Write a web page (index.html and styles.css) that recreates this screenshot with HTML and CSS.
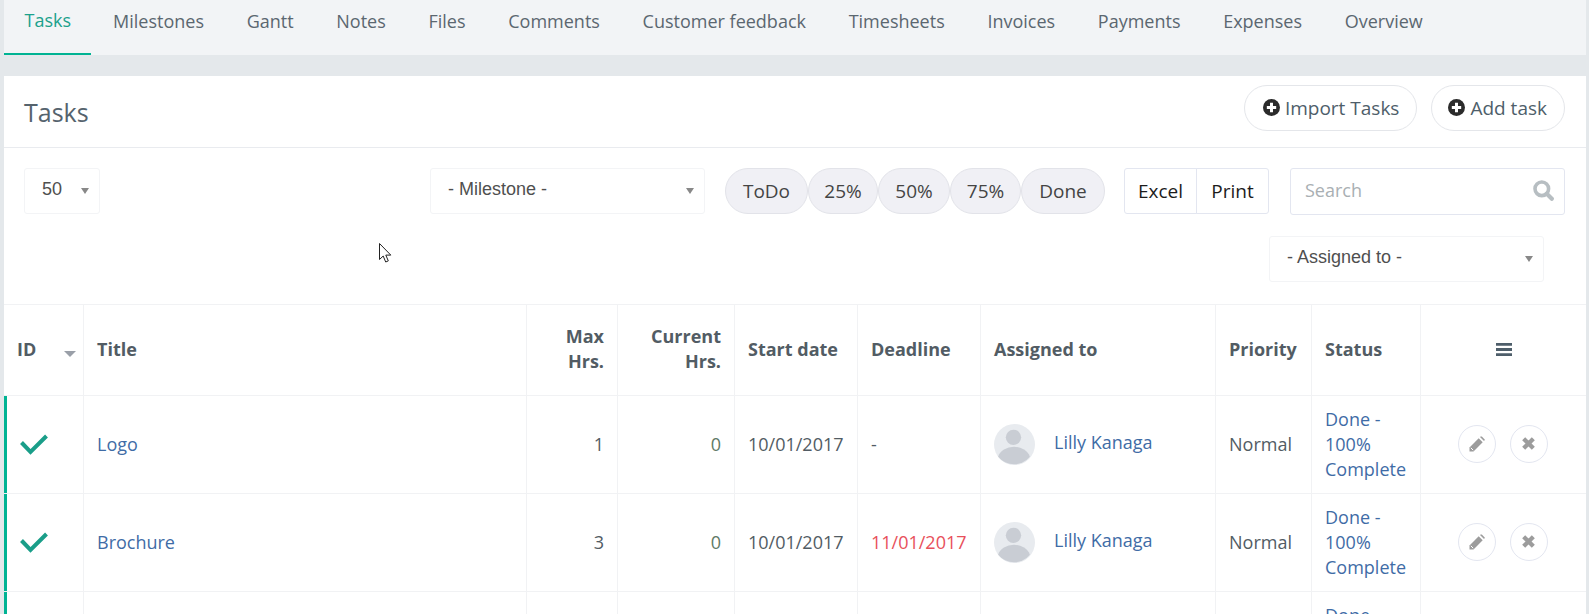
FILE: index.html
```html
<!DOCTYPE html>
<html lang="en">
<head>
  <meta charset="UTF-8" />
  <title>Tasks</title>
  <link rel="stylesheet" href="styles.css">
</head>
<body>
  <!-- Project tabs -->
  <ul class="tabs">
    <li class="tab active">Tasks</li>
    <li class="tab">Milestones</li>
    <li class="tab">Gantt</li>
    <li class="tab">Notes</li>
    <li class="tab">Files</li>
    <li class="tab">Comments</li>
    <li class="tab">Customer feedback</li>
    <li class="tab">Timesheets</li>
    <li class="tab">Invoices</li>
    <li class="tab">Payments</li>
    <li class="tab">Expenses</li>
    <li class="tab">Overview</li>
  </ul>

  <div class="panel">
    <div class="panel-head">
      <h1 class="panel-title">Tasks</h1>
      <div class="panel-actions">
        <a class="round-btn">
          <svg class="plus-icon" viewBox="0 0 16 16"><circle cx="8" cy="8" r="8" fill="#2b2b2b"/><path d="M8 3.6v8.8M3.6 8h8.8" stroke="#fff" stroke-width="2.8"/></svg>
          Import Tasks
        </a>
        <a class="round-btn">
          <svg class="plus-icon" viewBox="0 0 16 16"><circle cx="8" cy="8" r="8" fill="#2b2b2b"/><path d="M8 3.6v8.8M3.6 8h8.8" stroke="#fff" stroke-width="2.8"/></svg>
          Add task
        </a>
      </div>
    </div>

    <!-- Filters -->
    <div class="filters">
      <div class="filter-row">
        <div class="dropdown dropdown-small"><span>50</span><i class="caret"></i></div>
        <div class="dropdown dropdown-wide push-right"><span>- Milestone -</span><i class="caret"></i></div>
        <div class="pills">
          <a class="pill pill-todo">ToDo</a>
          <a class="pill pill-25">25%</a>
          <a class="pill pill-50">50%</a>
          <a class="pill pill-75">75%</a>
          <a class="pill pill-done">Done</a>
        </div>
        <div class="export-group">
          <a class="export-btn">Excel</a>
          <a class="export-btn">Print</a>
        </div>
        <div class="search-box">
          <span class="search-text">Search</span>
          <svg class="search-icon" viewBox="0 0 21 21"><circle cx="8.8" cy="8.8" r="6.8" fill="none" stroke="#b7bec2" stroke-width="3.6"/><path d="M13.8 13.8l5 5" stroke="#b7bec2" stroke-width="4.2" stroke-linecap="round"/></svg>
        </div>
      </div>
      <div class="filter-row filter-row-end">
        <div class="dropdown dropdown-wide"><span>- Assigned to -</span><i class="caret"></i></div>
      </div>
    </div>

    <table class="task-table">
      <colgroup>
        <col class="col-id"><col class="col-title"><col class="col-max"><col class="col-current">
        <col class="col-date"><col class="col-date"><col class="col-assigned"><col class="col-priority">
        <col class="col-status"><col class="col-actions">
      </colgroup>
      <thead>
        <tr>
          <th class="sort-cell">ID<i class="sort-caret"></i></th>
          <th>Title</th>
          <th class="num">Max Hrs.</th>
          <th class="num">Current Hrs.</th>
          <th>Start date</th>
          <th>Deadline</th>
          <th>Assigned to</th>
          <th>Priority</th>
          <th>Status</th>
          <th class="center">
            <svg class="menu-icon" viewBox="0 0 16 13"><path d="M0 0h16v2.8H0zM0 5.1h16v2.8H0zM0 10.200h16V13H0z" fill="#4e5e6a"/></svg>
          </th>
        </tr>
      </thead>
      <tbody>
        <tr>
          <td class="check-cell"><svg class="check-icon" viewBox="0 0 28 22"><path d="M1.500 8.500l9 9.500L26.500 2" fill="none" stroke="#1a9e89" stroke-width="4"/></svg></td>
          <td><a class="link">Logo</a></td>
          <td class="num">1</td>
          <td class="num zero">0</td>
          <td>10/01/2017</td>
          <td>-</td>
          <td>
            <div class="assignee">
              <svg class="avatar" viewBox="0 0 40 40"><circle cx="20" cy="20" r="20" fill="#e8ebef"/><circle cx="19" cy="13" r="7.500" fill="#c9cdd4"/><path d="M4 32a16 13 0 0 1 31 0a20 20 0 0 1-31 0z" fill="#c9cdd4"/></svg>
              <a class="link">Lilly Kanaga</a>
            </div>
          </td>
          <td>Normal</td>
          <td><a class="link">Done - 100% Complete</a></td>
          <td class="center">
            <div class="row-actions">
              <a class="icon-btn"><svg viewBox="0 0 16 16" width="16" height="16"><path d="M.5 11.500L9.700 2.300l4 4L4.500 15.500H.5z" fill="#9c9c9c"/><path d="M11 1l.6-.5h1.200l2.700 2.700v1.200L15 5z" fill="#9c9c9c"/><path d="M1.800 11.800l2.400 2.400" stroke="#fff" stroke-width="1"/></svg></a>
              <a class="icon-btn"><svg viewBox="0 0 14 14" width="15" height="15"><path d="M2.500 2.500l9 9M11.500 2.500l-9 9" stroke="#9c9c9c" stroke-width="4"/></svg></a>
            </div>
          </td>
        </tr>
        <tr>
          <td class="check-cell"><svg class="check-icon" viewBox="0 0 28 22"><path d="M1.500 8.500l9 9.500L26.500 2" fill="none" stroke="#1a9e89" stroke-width="4"/></svg></td>
          <td><a class="link">Brochure</a></td>
          <td class="num">3</td>
          <td class="num zero">0</td>
          <td>10/01/2017</td>
          <td class="overdue">11/01/2017</td>
          <td>
            <div class="assignee">
              <svg class="avatar" viewBox="0 0 40 40"><circle cx="20" cy="20" r="20" fill="#e8ebef"/><circle cx="19" cy="13" r="7.500" fill="#c9cdd4"/><path d="M4 32a16 13 0 0 1 31 0a20 20 0 0 1-31 0z" fill="#c9cdd4"/></svg>
              <a class="link">Lilly Kanaga</a>
            </div>
          </td>
          <td>Normal</td>
          <td><a class="link">Done - 100% Complete</a></td>
          <td class="center">
            <div class="row-actions">
              <a class="icon-btn"><svg viewBox="0 0 16 16" width="16" height="16"><path d="M.5 11.500L9.700 2.300l4 4L4.500 15.500H.5z" fill="#9c9c9c"/><path d="M11 1l.6-.5h1.200l2.700 2.700v1.200L15 5z" fill="#9c9c9c"/><path d="M1.800 11.800l2.400 2.400" stroke="#fff" stroke-width="1"/></svg></a>
              <a class="icon-btn"><svg viewBox="0 0 14 14" width="15" height="15"><path d="M2.500 2.500l9 9M11.500 2.500l-9 9" stroke="#9c9c9c" stroke-width="4"/></svg></a>
            </div>
          </td>
        </tr>
        <tr>
          <td class="check-cell"></td>
          <td></td>
          <td></td>
          <td></td>
          <td></td>
          <td></td>
          <td></td>
          <td></td>
          <td><a class="link">Done - 100% Complete</a></td>
          <td></td>
        </tr>
      </tbody>
    </table>

    <!-- Mouse pointer caught in the capture -->
    <svg class="cursor" viewBox="0 0 13 20"><path d="M.5.500v16l3.700-3.500 2.500 6 2.600-1.100-2.500-5.800h5z" fill="#fff" stroke="#222" stroke-width="1"/></svg>
  </div>
</body>
</html>
```

FILE: styles.css
```css
* { box-sizing: border-box; margin: 0; padding: 0; }

html, body { height: 100%; }

body {
  font-family: 'Open Sans', sans-serif;
  font-size: 18px;
  color: #525c64;
  background: #e4e8eb;
  padding: 0 3px 0 4px;
  overflow: hidden;
}

/* Tabs */
.tabs {
  display: flex;
  list-style: none;
  height: 55px;
  background: #f2f4f6;
}

.tab {
  padding: 9px 21.350px 0;
  line-height: 24px;
  color: #5b6770;
}

.tab.active {
  padding: 8px 20px 0 20.500px;
  color: #1ba18c;
  border-bottom: 2px solid #00b393;
}

.tab.active + .tab { padding-left: 22px; }

/* Panel */
.panel {
  position: relative;
  margin-top: 21px;
  background: #fff;
}

.panel-head {
  display: flex;
  justify-content: space-between;
  align-items: center;
  height: 72px;
  padding: 0 21px 0 20px;
  border-bottom: 1px solid #e9ebef;
}

.panel-title {
  font-size: 25px;
  font-weight: 400;
  line-height: 30px;
  margin-top: 1px;
  color: #55636d;
}

.panel-actions {
  display: flex;
  gap: 14px;
  margin-top: -8px;
}

.round-btn {
  display: flex;
  align-items: center;
  gap: 5px;
  height: 46px;
  padding: 0 17px 0 16px;
  font-size: 19px;
  color: #4e5e6a;
  border: 1px solid #e4e6ea;
  border-radius: 23px;
}

.round-btn:first-child { padding-left: 18px; }

.plus-icon { width: 17px; height: 17px; }

/* Filters */
.filters {
  padding: 20px 21px 22px 20px;
}

.filter-row {
  display: flex;
  align-items: flex-start;
}

.filter-row-end {
  justify-content: flex-end;
  padding-right: 21px;
  margin-top: 21px;
}

.push-right { margin-left: auto; }

.dropdown {
  display: flex;
  align-items: center;
  justify-content: space-between;
  height: 46px;
  padding: 0 10px 0 17px;
  font-family: 'Liberation Sans', sans-serif;
  color: #4f4f4f;
  background: #fff;
  border: 1px solid #f3f4f6;
  border-radius: 3px;
}

.dropdown span { margin-top: -3px; }

.dropdown-small { width: 76px; }
.dropdown-wide { width: 275px; }

.caret {
  width: 0;
  height: 0;
  margin-top: -1px;
  border-left: 4px solid transparent;
  border-right: 4px solid transparent;
  border-top: 6px solid #888;
}

.pills {
  display: flex;
  margin-left: 20px;
  font-size: 19px;
}

.pill {
  display: flex;
  align-items: center;
  justify-content: center;
  height: 46px;
  color: #444;
  background: #f0f0f5;
  border: 1px solid #e2e3e9;
  border-radius: 23px;
}

.pill-todo { width: 83px; }
.pill-25 { width: 70px; }
.pill-50 { width: 72px; }
.pill-75 { width: 71px; }
.pill-done { width: 84px; }

.export-group {
  display: flex;
  margin-left: 19px;
  font-size: 19px;
}

.export-btn {
  display: flex;
  align-items: center;
  justify-content: center;
  width: 73px;
  height: 46px;
  color: #1c1c1c;
  border: 1px solid #e3e6f0;
  border-radius: 3px 0 0 3px;
}

.export-btn + .export-btn {
  margin-left: -1px;
  border-radius: 0 3px 3px 0;
}

.search-box {
  display: flex;
  align-items: center;
  justify-content: space-between;
  width: 275px;
  height: 47px;
  margin-left: 21px;
  padding: 0 10px 0 14px;
  border: 1px solid #e3e6f0;
  border-radius: 3px;
}

.search-text { color: #a9afb3; margin-top: -3px; }
.search-icon { width: 21px; height: 21px; margin-top: -2px; }

/* Table */
.task-table {
  width: 100%;
  table-layout: fixed;
  border-collapse: separate;
  border-spacing: 0;
}

.col-id { width: 80px; }
.col-title { width: 443px; }
.col-max { width: 91px; }
.col-current { width: 117px; }
.col-date { width: 123px; }
.col-assigned { width: 235px; }
.col-priority { width: 96px; }
.col-status { width: 109px; }
.col-actions { width: 165px; }

th, td {
  padding: 11px 13px;
  line-height: 25px;
  text-align: left;
  vertical-align: middle;
  border-right: 1px solid #f1f2f4;
  border-bottom: 1px solid #f1f2f4;
}

th {
  padding: 19px 13px 21px;
  font-weight: 700;
  border-top: 1px solid #f1f2f4;
}

th:last-child, td:last-child { border-right: none; }

th.num, td.num { text-align: right; }
th.center, td.center { text-align: center; }

.sort-cell { position: relative; }

.sort-caret {
  position: absolute;
  left: 60px;
  top: 46px;
  width: 0;
  height: 0;
  border-left: 6px solid transparent;
  border-right: 6px solid transparent;
  border-top: 6px solid #9a9fa8;
}

.menu-icon { display: block; width: 16px; height: 13px; margin: 0 auto; }

.check-cell {
  padding: 0 0 0 16px;
  box-shadow: inset 3px 0 0 #00b393;
}

.check-icon { display: block; width: 28px; height: 22px; }

.link { color: #3f6ca6; }
.overdue { color: #e8505b; }
.zero { color: #5f7a66; }

.assignee {
  display: flex;
  align-items: center;
  gap: 19px;
}

.assignee .link { margin-top: -5px; }

.avatar { width: 41px; height: 41px; flex: none; }

.row-actions {
  display: flex;
  justify-content: center;
  gap: 14px;
  padding-right: 2px;
  margin-top: -2px;
}

.icon-btn {
  display: flex;
  align-items: center;
  justify-content: center;
  width: 38px;
  height: 38px;
  border: 1px solid #e3e6f0;
  border-radius: 50%;
}

.cursor {
  position: absolute;
  left: 375px;
  top: 167px;
  width: 13px;
  height: 20px;
}
```
